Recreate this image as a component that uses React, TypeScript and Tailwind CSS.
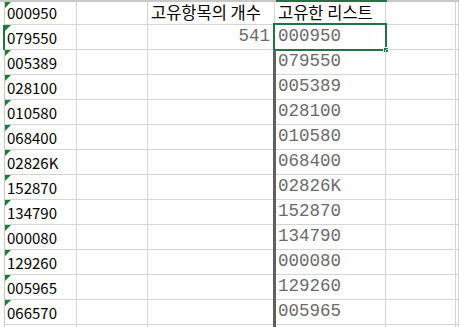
const colA = [
  "000950",
  "079550",
  "005389",
  "028100",
  "010580",
  "068400",
  "02826K",
  "152870",
  "134790",
  "000080",
  "129260",
  "005965",
  "066570",
  "",
];

const colD = [
  "",
  "000950",
  "079550",
  "005389",
  "028100",
  "010580",
  "068400",
  "02826K",
  "152870",
  "134790",
  "000080",
  "129260",
  "005965",
  "",
];

const kr = "font-['Malgun_Gothic','Noto_Sans_CJK_KR',sans-serif]";
const mono = "font-['Liberation_Mono','Noto_Sans_CJK_KR',monospace]";

const Row = ({ i }: { i: number }) => {
  const h = i === 0 ? "h-[23px]" : "h-[25px]";
  const cell = "relative flex items-end border-r border-b border-[#d4d4d4] " + h;
  return (
    <div className="flex">
      {/* row header edge */}
      <div
        className={
          "w-[5px] shrink-0 border-r " +
          h +
          (i === 1 ? " border-r-[2px] border-[#217346]" : " border-[#c8c8c8]")
        }
      />
      {/* A */}
      <div className={cell + " w-[72px] shrink-0 pl-[2px] pb-[4px]"}>
        {colA[i] && (
          <>
            <span className="absolute left-0 top-0 h-0 w-0 border-t-[6px] border-r-[6px] border-t-[#1e7b37] border-r-transparent" />
            <span className={kr + " text-[15px] leading-[15px] text-black"}>{colA[i]}</span>
          </>
        )}
      </div>
      {/* B */}
      <div className={cell + " w-[71px] shrink-0"} />
      {/* C */}
      <div className={cell + " w-[127px] shrink-0 pb-[4px]"}>
        {i === 0 && (
          <span className={kr + " pl-[3px] text-[16.5px] leading-[16px] text-black"}>
            고유항목의 개수
          </span>
        )}
        {i === 1 && (
          <span className={mono + " ml-auto pr-[4px] text-[17.5px] leading-[17px] text-[#6a6a6a]"}>
            541
          </span>
        )}
      </div>
      {/* D */}
      <div className={cell + " w-[111px] shrink-0 pb-[4px]"}>
        {i === 0 && (
          <span className={kr + " pl-[3px] text-[16.5px] leading-[16px] text-black"}>
            고유한 리스트
          </span>
        )}
        {i > 0 && colD[i] && (
          <span className={mono + " pl-[3px] text-[17.5px] leading-[17px] text-[#6a6a6a]"}>
            {colD[i]}
          </span>
        )}
        {i >= 2 && (
          <span className="absolute -left-[2px] top-0 -bottom-[1px] w-[3px] bg-[#606060]" />
        )}
        {i === 1 && (
          <>
            <span className="absolute -left-[2px] -top-[2px] -right-[2px] -bottom-[2px] border-2 border-[#217346]" />
            <span className="absolute -right-[4px] -bottom-[4px] h-[6px] w-[6px] border border-white bg-[#217346]" />
          </>
        )}
      </div>
      {/* E */}
      <div className={cell + " w-[70px] shrink-0"} />
      {/* F */}
      <div className={cell + " flex-1"} />
    </div>
  );
};

export default function App() {
  return (
    <div className="h-[327px] w-[459px] overflow-hidden bg-white">
      <div className="flex h-[2px]">
        <div className="w-[276px] bg-[#c8c8c8]" />
        <div className="w-[111px] bg-[#217346]" />
        <div className="flex-1 bg-[#c8c8c8]" />
      </div>
      {colA.map((_, i) => (
        <Row key={i} i={i} />
      ))}
    </div>
  );
}
